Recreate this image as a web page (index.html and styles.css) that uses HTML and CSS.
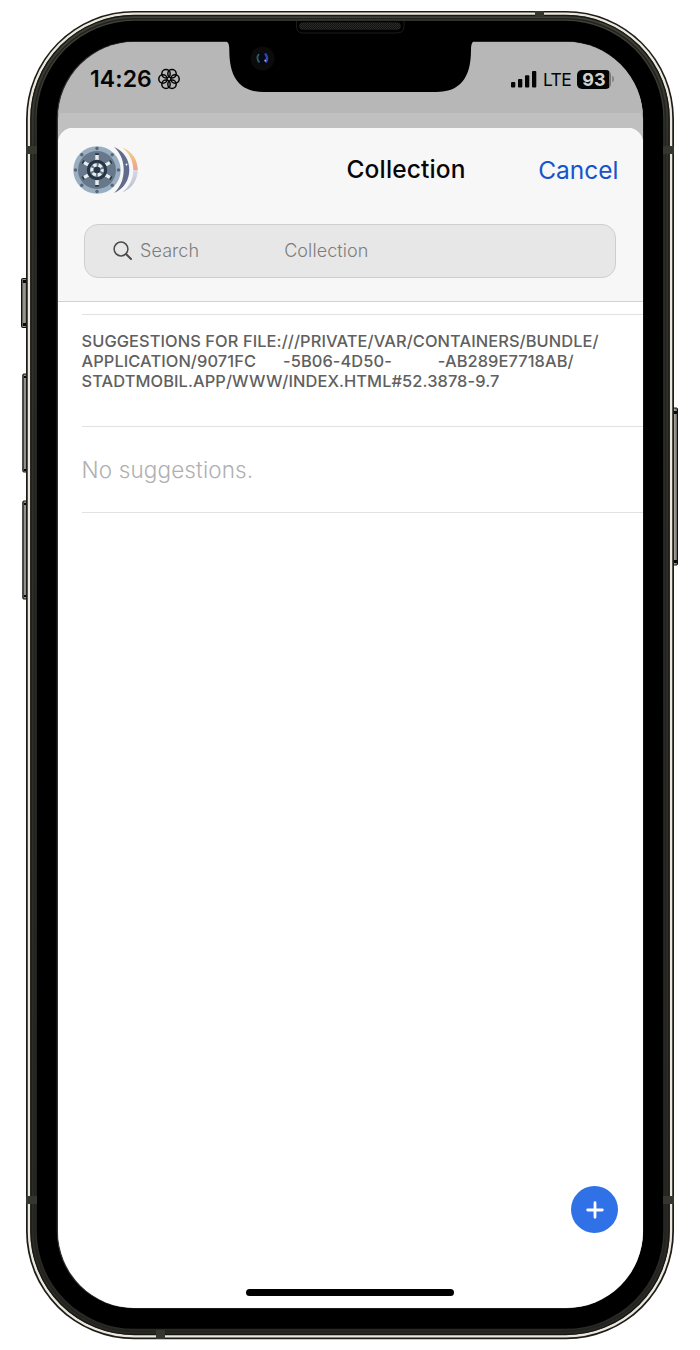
FILE: index.html
```html
<!DOCTYPE html>
<html lang="en">
<head>
<meta charset="utf-8">
<title>Collection</title>
<link rel="stylesheet" href="styles.css">
</head>
<body>
<div class="device">
  <svg class="shell" width="700" height="1350" viewBox="0 0 700 1350" aria-hidden="true">
    <defs>
      <linearGradient id="metal" x1="0" x2="1" y1="0" y2="0">
        <stop offset="0" stop-color="#33332d"/><stop offset=".4" stop-color="#a3a39b"/><stop offset="1" stop-color="#55554d"/>
      </linearGradient>
      <linearGradient id="band" x1="0" x2="0" y1="0" y2="1">
        <stop offset="0" stop-color="#404339"/><stop offset=".1" stop-color="#30312b"/><stop offset="1" stop-color="#292925"/>
      </linearGradient>
    </defs>
    <g fill="url(#metal)" stroke="#11110f" stroke-width="1">
      <rect x="21.500" y="278.500" width="6" height="49" rx="1"/>
      <rect x="22.800" y="374" width="5" height="98" rx="1"/>
      <rect x="22.800" y="501" width="5" height="98" rx="1"/>
      <rect x="672.500" y="408" width="5" height="157" rx="1"/>
    </g>
    <g fill="#090909">
      <path d="M23 280h4v3h-4zM23 323h4v3h-4zM24 376h3v2h-3zM24 469h3v2h-3zM24 503h3v2h-3zM24 595h3v2h-3zM674 411h3v3h-3zM674 560h3v3h-3z"/>
    </g>
    <rect x="26" y="11" width="648" height="1328.300" rx="108" fill="#1c1c19"/>
    <rect x="29" y="13.700" width="642" height="1322.600" rx="105" fill="url(#band)" stroke="#ebe7dc" stroke-width="2.500"/>
    <rect x="30.900" y="15.500" width="638.200" height="1319" rx="103.200" fill="none" stroke="#171815" stroke-width="1.300"/>
    <rect x="34.500" y="18.800" width="631" height="1312.500" rx="99.500" fill="none" stroke="#22231f" stroke-width="1.500"/>
    <rect x="36.800" y="20.800" width="626.400" height="1308" rx="97.500" fill="#000"/>
    <rect x="56.700" y="41.200" width="586.600" height="1267.400" rx="77.500" fill="#333"/>
    <path fill="#353630" d="M26 146h11v8H26zM663 146h11v8h-11zM26 1196h11v8H26zM663 1196h11v8h-11zM535 11h9v6h-9zM156 1330h9v9h-9z"/>
  </svg>

  <main class="screen">
    <header class="status">
      <div class="clock">
        <span class="time">14:26</span>
        <svg width="22" height="22" viewBox="-11 -11 22 22" fill="none" stroke="#050505" stroke-width="1.500">
          <circle cx="6" cy="0" r="4.200"/><circle cx="3" cy="5.200" r="4.200"/><circle cx="-3" cy="5.200" r="4.200"/>
          <circle cx="-6" cy="0" r="4.200"/><circle cx="-3" cy="-5.200" r="4.200"/><circle cx="3" cy="-5.200" r="4.200"/>
        </svg>
      </div>
      <div class="signals">
        <svg width="26" height="17" viewBox="0 0 26 17" fill="#050505">
          <rect x="0" y="11" width="4.300" height="5.500" rx="1"/><rect x="7" y="8" width="4.300" height="8.500" rx="1"/>
          <rect x="14" y="4.200" width="4.300" height="12.300" rx="1"/><rect x="21" y="0" width="4.300" height="16.500" rx="1"/>
        </svg>
        <span class="network">LTE</span>
        <div class="battery"><span class="charge">93</span><i class="cap"></i></div>
      </div>
    </header>

    <section class="sheet">
      <div class="top">
        <div class="titlebar">
          <svg class="logo" width="66" height="48" viewBox="0 0 66 48">
            <defs>
              <linearGradient id="crescent" x1="0" x2="0" y1="0" y2="1">
                <stop offset="0" stop-color="#f8d17e"/><stop offset=".500" stop-color="#eda18e"/><stop offset=".510" stop-color="#d8d8e4"/><stop offset="1" stop-color="#b9bdcf"/>
              </linearGradient>
              <g id="spoke">
                <rect x="-1.800" y="-16.700" width="3.600" height="9" fill="#283544"/>
                <rect x="-1.800" y="-15" width="3.600" height="5" fill="#e5edf1"/>
              </g>
            </defs>
            <path d="M49 1.600C70 8.600 70 39.400 49 46.400C64 36 64 12 49 1.600Z" fill="url(#crescent)"/>
            <path d="M41 1C61.500 9 61.500 39 41 47C54 36 54 12 41 1Z" fill="#616b8b"/>
            <circle cx="53.500" cy="18.500" r=".9" fill="#fff"/>
            <g transform="translate(24 24)">
              <circle r="23.700" fill="#99afc1"/><circle r="19" fill="#68788b"/>
              <g fill="#566779">
                <circle cx="21.500" r="1.700"/><circle cx="-21.500" r="1.700"/><circle cy="21.500" r="1.700"/><circle cy="-21.500" r="1.700"/>
                <circle cx="15.200" cy="15.200" r="1.700"/><circle cx="-15.200" cy="15.200" r="1.700"/><circle cx="15.200" cy="-15.200" r="1.700"/><circle cx="-15.200" cy="-15.200" r="1.700"/>
              </g>
              <use href="#spoke"/><use href="#spoke" transform="rotate(60)"/><use href="#spoke" transform="rotate(120)"/>
              <use href="#spoke" transform="rotate(180)"/><use href="#spoke" transform="rotate(240)"/><use href="#spoke" transform="rotate(300)"/>
              <circle r="8.700" fill="#68788b" stroke="#283544" stroke-width="3"/>
              <circle r="5.100" fill="none" stroke="#e5edf1" stroke-width="3.200" stroke-dasharray="3.400 1.940" stroke-dashoffset="1.700"/>
              <circle r="3.300" fill="#283544"/>
            </g>
          </svg>
          <h1 class="title">Collection</h1>
          <a class="cancel">Cancel</a>
        </div>
        <div class="search">
          <svg width="20" height="20" viewBox="0 0 20 20" fill="none" stroke="#4b4b4b" stroke-width="1.500" stroke-linecap="round">
            <circle cx="8" cy="8" r="6.900"/><path stroke-width="2" d="m13 13 5 5"/>
          </svg>
          <span class="hint">Search</span>
          <span class="scope">Collection</span>
        </div>
      </div>
      <div class="list">
        <h2 class="heading">
          <span class="row l1">SUGGESTIONS FOR FILE:///PRIVATE/VAR/CONTAINERS/BUNDLE/</span>
          <span class="row l2"><span class="p1">APPLICATION/9071FC</span><span class="p2">-5B06-4D50-</span><span class="p3">-AB289E7718AB/</span></span>
          <span class="row l3">STADTMOBIL.APP/WWW/INDEX.HTML#52.3878-9.7</span>
        </h2>
        <p class="empty">No suggestions.</p>
      </div>
      <footer class="bottom">
        <button class="add" aria-label="Add">
          <svg width="18" height="18" viewBox="0 0 18 18" stroke="#fff" stroke-width="2.800" stroke-linecap="round"><path d="M9 1.700v14.600M1.700 9h14.600"/></svg>
        </button>
        <div class="home"></div>
      </footer>
    </section>
  </main>

  <svg class="notch" width="246" height="74" viewBox="227 20 246 74" aria-hidden="true">
    <defs>
      <pattern id="mesh" width="2" height="2" patternUnits="userSpaceOnUse"><rect width="2" height="2" fill="#111"/><rect width="1" height="1" fill="#2c2c2c"/><rect x="1" y="1" width="1" height="1" fill="#2c2c2c"/></pattern>
    </defs>
    <path d="M227 40V42C229 43 229.300 46 229.300 50C229.300 78 240 92 264 92H436C460 92 471 78 471 50C471 46 471.500 43 473 42V40Z" fill="#000"/>
    <path d="M296.500 21V26Q296.500 33 303 33H397Q404 33 404 26V21" fill="none" stroke="#1c1c1c"/>
    <rect x="299.500" y="22.800" width="101" height="6.500" rx="3.200" fill="url(#mesh)" stroke="#292929" stroke-width=".6"/>
    <circle cx="262.500" cy="58.500" r="12" fill="#0b0b0c"/>
    <circle cx="262.500" cy="58.500" r="6" fill="#050914"/>
    <path d="M259 54Q255.500 58 259.500 62.500" fill="none" stroke="#315f67" stroke-width="1.800"/>
    <path d="M265 53.500Q269 58 265.500 62.500" fill="none" stroke="#3145ad" stroke-width="2.500"/>
    <circle cx="265.300" cy="60.500" r="1" fill="#b9a0df"/>
  </svg>
</div>
</body>
</html>
```
FILE: styles.css
```css
* { box-sizing: border-box; }
body { margin: 0; background: #fff; font-family: Inter, "Liberation Sans", sans-serif; }
.device { position: relative; width: 700px; height: 1350px; padding: 42px 57.500px; overflow: hidden; }
.shell { position: absolute; left: 0; top: 0; }
.notch { position: absolute; left: 227px; top: 20px; }

.screen { position: relative; display: flex; flex-direction: column; height: 1266px; overflow: hidden; border-radius: 77px; background: #c0c0c0; }
.status { display: flex; flex: none; justify-content: space-between; height: 71px; margin-bottom: 14.500px; padding: 3px 28.500px 0 32.500px; background: #b7b7b7; color: #050505; }
.clock, .signals { display: flex; align-items: center; }
.clock { gap: 6px; }
.time { font-size: 23px; font-weight: 600; letter-spacing: 0.100px; }
.signals { gap: 6px; }
.network { font-size: 17.500px; letter-spacing: -0.700px; }
.battery { display: flex; align-items: center; gap: 1px; }
.charge { width: 34px; height: 19px; border-radius: 5px; background: linear-gradient(90deg, #050505 93%, #777 93%); color: #d2d2d2; font-size: 18px; font-weight: 700; line-height: 19px; text-align: center; }
.cap { width: 2px; height: 6px; border-radius: 0 2px 2px 0; background: #888; }

.sheet { display: flex; flex: 1; flex-direction: column; border-radius: 15px 15px 0 0; overflow: hidden; background: #fff; }
.top { flex: none; height: 174.500px; border-bottom: 1px solid #d2d2d2; background: #f7f7f7; }
.titlebar { display: flex; align-items: center; height: 84px; padding: 0 24px 0 15.500px; }
.logo { display: block; flex: none; }
.title { margin: 0 0 2px 207.500px; font-size: 24.500px; font-weight: 550; letter-spacing: 0.150px; color: #060606; }
.cancel { margin-left: auto; font-size: 24.500px; color: #1554cc; }
.search { display: flex; align-items: center; height: 54px; margin: 12px 27px 0 26.500px; padding-left: 28px; border: 1.500px solid #cecece; border-radius: 14px; background: #e7e7e7; color: #7d7d7d; font-size: 18px; font-weight: 350; letter-spacing: 0.080px; }
.hint { margin-left: 7px; }
.scope { margin-left: 85px; }

.list { margin: 12px 0 0 24px; border-top: 1px solid #e2e2e2; }
.heading { height: 111px; margin: 0; padding-top: 16px; color: #606060; font-size: 16.400px; font-weight: 550; letter-spacing: 0.090px; line-height: 20px; }
.row { display: flex; white-space: nowrap; }
.p2 { margin-left: 27px; }
.p3 { margin-left: 46px; }
.empty { height: 87px; margin: 0; border: solid #e2e2e2; border-width: 1px 0; color: #b0b0b0; font-size: 22.500px; font-weight: 350; letter-spacing: 0.130px; line-height: 86px; }

.bottom { display: flex; flex-direction: column; align-items: center; margin-top: auto; }
.add { display: grid; place-items: center; align-self: flex-end; width: 47px; height: 47px; margin: 0 24.500px 56px 0; padding: 0; border: 0; border-radius: 50%; background: #3071e7; }
.home { width: 208px; height: 7px; margin-bottom: 12px; border-radius: 4px; background: #000; }
```
